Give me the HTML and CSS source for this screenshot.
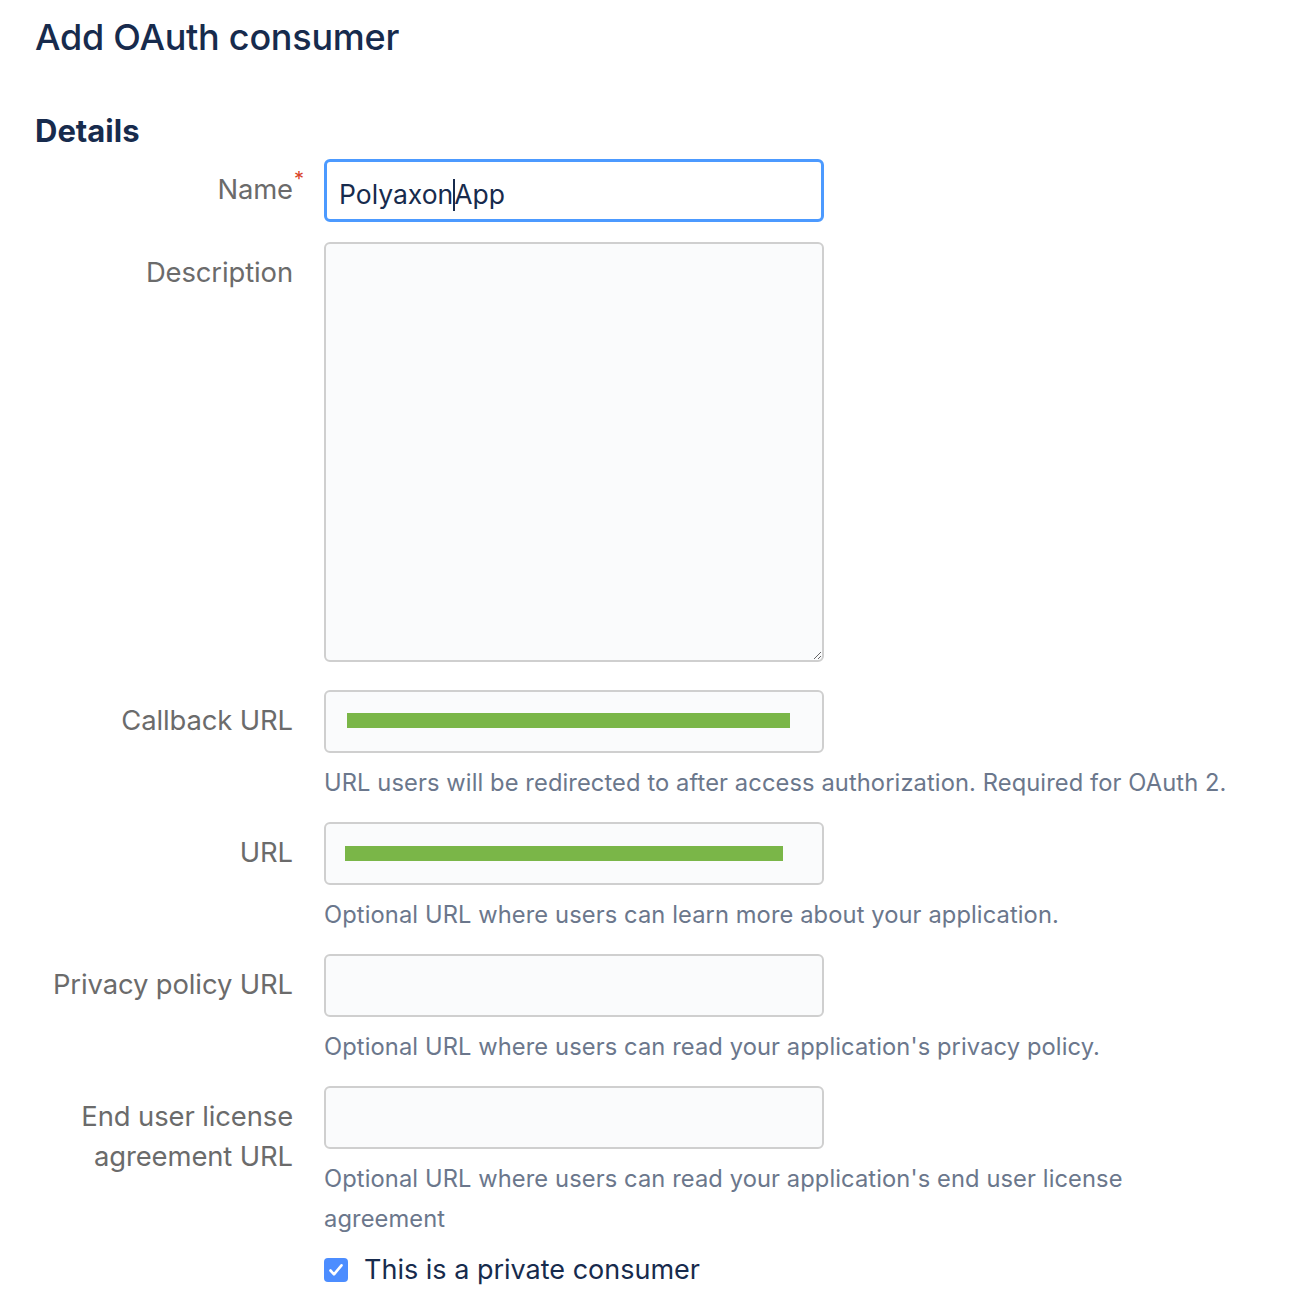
FILE: index.html
```html
<!DOCTYPE html>
<html lang="en">
<head>
<meta charset="utf-8">
<title>Add OAuth consumer</title>
<link rel="stylesheet" href="styles.css">
</head>
<body>
<main class="page">
  <h1 class="title">Add OAuth consumer</h1>
  <h2 class="section">Details</h2>
  <form class="form">
    <div class="row row-name">
      <label class="label"><span class="label-text">Name<span class="req">*</span></span></label>
      <div class="field">
        <div class="input focused" role="textbox">Polyaxon<span class="caret"></span>App</div>
      </div>
    </div>
    <div class="row row-desc">
      <label class="label">Description</label>
      <div class="field">
        <textarea class="textarea"></textarea>
      </div>
    </div>
    <div class="row">
      <label class="label">Callback URL</label>
      <div class="field">
        <div class="input"><span class="redact redact-a"></span></div>
        <p class="help">URL users will be redirected to after access authorization. Required for OAuth 2.</p>
      </div>
    </div>
    <div class="row">
      <label class="label">URL</label>
      <div class="field">
        <div class="input"><span class="redact redact-b"></span></div>
        <p class="help">Optional URL where users can learn more about your application.</p>
      </div>
    </div>
    <div class="row">
      <label class="label">Privacy policy URL</label>
      <div class="field">
        <div class="input"></div>
        <p class="help">Optional URL where users can read your application's privacy policy.</p>
      </div>
    </div>
    <div class="row">
      <label class="label">End user license<br>agreement URL</label>
      <div class="field">
        <div class="input"></div>
        <p class="help help-wide">Optional URL where users can read your application's end user license agreement</p>
      </div>
    </div>
    <div class="row row-check">
      <div class="label"></div>
      <label class="check">
        <span class="box"><svg viewBox="0 0 24 24" width="24" height="24"><path d="M6.5 12.5l3.5 3.8 7.5-9" fill="none" stroke="#fff" stroke-width="2.6" stroke-linecap="round" stroke-linejoin="round"/></svg></span>
        <span class="check-text">This is a private consumer</span>
      </label>
    </div>
  </form>
</main>
</body>
</html>
```

FILE: styles.css
```css
html, body {
  margin: 0;
  padding: 0;
  background: #ffffff;
}

body {
  font-family: Inter, "Noto Sans", "Liberation Sans", sans-serif;
  color: #172b4d;
}

.page {
  padding: 10px 0 0 35px;
}

.title {
  margin: 0;
  font-size: 36px;
  font-weight: 500;
  line-height: 54px;
  letter-spacing: -0.25px;
  color: #172b4d;
}

.section {
  margin: 45px 0 0 0;
  font-size: 31px;
  font-weight: 700;
  line-height: 44px;
  color: #172b4d;
}

.form {
  margin-top: 6px;
}

.row {
  display: grid;
  grid-template-columns: 258px 500px;
  column-gap: 31px;
  margin-bottom: 19px;
}

.row-name {
  margin-bottom: 20px;
}

.row-desc {
  margin-bottom: 28px;
}

.label {
  text-align: right;
  font-size: 27.4px;
  line-height: 40px;
  padding-top: 10px;
  color: #6b6b6b;
  letter-spacing: -0.1px;
}

.label-text {
  position: relative;
}

.req {
  position: absolute;
  right: -11px;
  top: -3px;
  color: #d9432a;
  font-size: 20px;
  line-height: 20px;
}

.field {
  display: flex;
  flex-direction: column;
}

.input {
  box-sizing: border-box;
  height: 63px;
  border: 2px solid #cfcfcf;
  border-radius: 6px;
  background: #fafbfc;
  font-size: 26.5px;
  line-height: 59px;
  padding: 0 14px;
  color: #172b4d;
  display: flex;
  align-items: center;
  white-space: nowrap;
}

.input.focused {
  border: 3px solid #4c9aff;
  background: #ffffff;
  padding-left: 12px;
  padding-top: 8px;
}

.caret {
  display: inline-block;
  width: 2px;
  height: 32px;
  background: #172b4d;
  margin: 0 -1px 0 0;
}

.textarea {
  display: block;
  box-sizing: border-box;
  width: 500px;
  height: 420px;
  border: 2px solid #cfcfcf;
  border-radius: 6px;
  background: #fafbfc;
  resize: both;
  margin: 0;
  font: inherit;
}

.redact {
  display: block;
  height: 15px;
  background: #7ab648;
}

.redact-a {
  width: 443px;
  margin-left: 7px;
  margin-top: -2px;
}

.redact-b {
  width: 438px;
  margin-left: 5px;
  margin-top: 0;
}

.help {
  margin: 10px 0 0 0;
  font-size: 23.7px;
  line-height: 40px;
  color: #6b778c;
  white-space: nowrap;
  letter-spacing: 0.1px;
}

.help-wide {
  white-space: normal;
  width: 830px;
}

.row-check {
  margin-top: -8px;
}

.check {
  display: flex;
  align-items: center;
  gap: 16px;
  font-size: 27px;
  line-height: 40px;
  color: #172b4d;
}

.box {
  width: 24px;
  height: 24px;
  border-radius: 4px;
  background: #4c8dff;
  display: inline-flex;
  align-items: center;
  justify-content: center;
  flex: none;
}

.box svg {
  display: block;
}
```
